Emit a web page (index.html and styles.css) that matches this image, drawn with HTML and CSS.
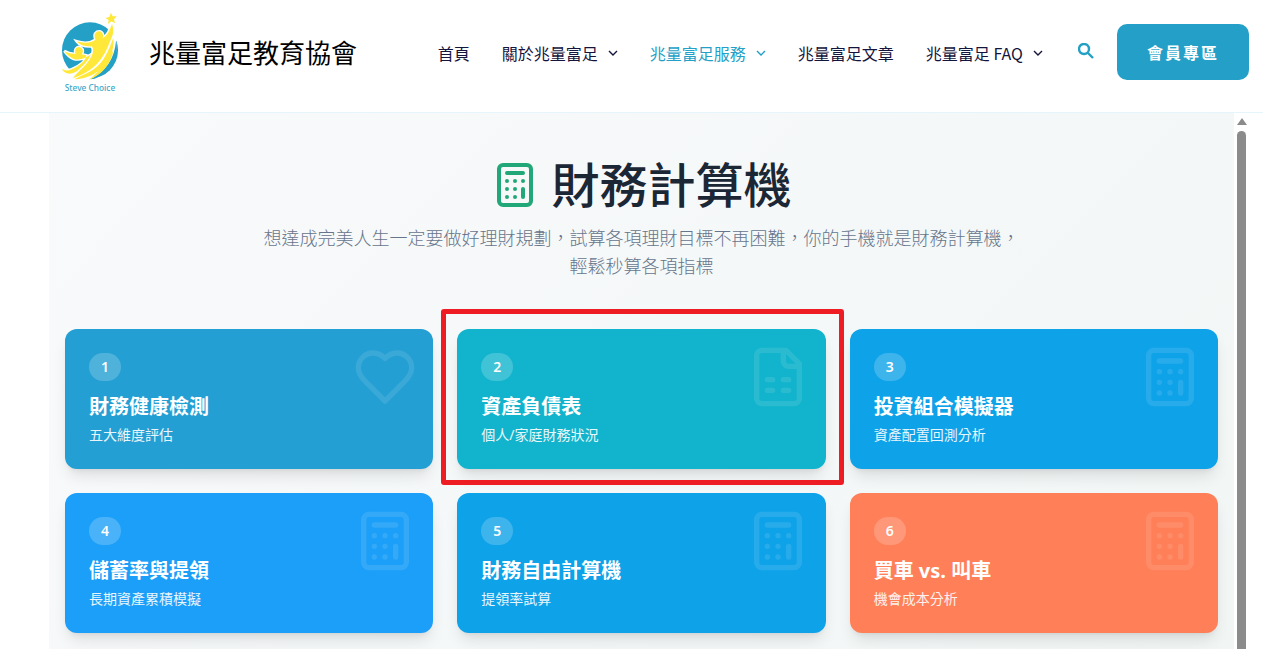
FILE: index.html
```html
<!DOCTYPE html>
<html lang="zh-Hant">
<head>
<meta charset="utf-8">
<meta name="viewport" content="width=device-width, initial-scale=1">
<title>財務計算機 - 兆量富足教育協會</title>
<link rel="stylesheet" href="styles.css">
</head>
<body>
<svg class="sprite" aria-hidden="true">
  <symbol id="calculator" viewBox="0 0 24 24">
    <rect x="4" y="2" width="16" height="20" rx="2"/>
    <path d="M8 6h8M16 14v4M16 10h.01M12 10h.01M8 10h.01M12 14h.01M8 14h.01M12 18h.01M8 18h.01"/>
  </symbol>
  <symbol id="heart" viewBox="0 0 24 24">
    <path d="M19 14c1.49-1.46 3-3.21 3-5.5A5.5 5.5 0 0 0 16.5 3c-1.76 0-3 .5-4.5 2-1.5-1.5-2.74-2-4.5-2A5.5 5.5 0 0 0 2 8.5c0 2.3 1.5 4.05 3 5.5l7 7Z"/>
  </symbol>
  <symbol id="sheet" viewBox="0 0 24 24">
    <path d="M15 2H6a2 2 0 0 0-2 2v16a2 2 0 0 0 2 2h12a2 2 0 0 0 2-2V7Z"/>
    <path d="M14 2v4a2 2 0 0 0 2 2h4M8 13h2M14 13h2M8 17h2M14 17h2"/>
  </symbol>
  <symbol id="chevron" viewBox="0 0 10 10">
    <path d="M1 3l4 4 4-4"/>
  </symbol>
</svg>

<header class="site-header">
  <a class="brand" href="#">
    <svg class="brand-logo" viewBox="-18 9 240 288" role="img" aria-label="Steve Choice">
      <circle cx="105" cy="136" r="84" fill="#24a0c6"/>
      <path d="M158 48L194 62L196 100L183 108C192 146 172 196 110 224L50 228L40 204L110 190L160 120Z" fill="#fff"/>
      <path d="M183 108C192 144 181 198 119 221L106 223C152 199 179 160 183 108Z" fill="#24a0c6"/>
      <g fill="#ffe83a" stroke="#fff" stroke-width="8" paint-order="stroke">
        <path d="M28 138C37 143 50 148 62 146C56 132 68 122 78 128C86 134 84 143 80 148L94 151C93 167 73 183 50 193C37 199 26 197 20 190C26 205 40 209 54 204C86 193 109 173 118 142C92 160 75 167 56 162C45 157 36 150 28 138Z"/>
        <path d="M171 56C163 82 153 93 144 99C147 82 136 76 126 80C116 86 118 98 122 104C108 114 88 116 65 109C74 121 92 125 111 124C119 139 111 158 92 179C79 193 61 207 54 220C81 212 113 193 133 169C154 143 162 115 172 93C176 80 175 68 171 56Z"/>
      </g>
      <g fill="#ffe83a">
        <path d="M168 23l5 11 12 0-8 9 3 12-11-6-10 8 2-12-10-6 12-3z"/>
        <path d="M175 98C179 138 163 171 133 196C109 216 78 223 58 223C87 208 111 200 130 181C152 158 163 131 175 98Z"/>
        <path d="M175 136C169 176 142 209 101 225C130 203 152 175 175 136Z"/>
      </g>
      <text x="105" y="258" text-anchor="middle" class="logo-caption">Steve Choice</text>
    </svg>
    <span class="brand-name">兆量富足教育協會</span>
  </a>
  <nav class="main-nav" aria-label="主選單">
    <a class="nav-link" href="#">首頁</a>
    <a class="nav-link" href="#">關於兆量富足<svg class="chevron"><use href="#chevron"/></svg></a>
    <a class="nav-link active" href="#">兆量富足服務<svg class="chevron"><use href="#chevron"/></svg></a>
    <a class="nav-link" href="#">兆量富足文章</a>
    <a class="nav-link" href="#">兆量富足 FAQ<svg class="chevron"><use href="#chevron"/></svg></a>
    <button class="search" type="button" aria-label="搜尋">
      <svg viewBox="0 0 16 16"><circle cx="6" cy="6" r="5"/><path d="M10 10l5 5"/></svg>
    </button>
  </nav>
  <a class="member" href="#">會員專區</a>
</header>

<main class="frame">
  <div class="panel">
    <div class="intro">
      <h1 class="title"><svg class="title-icon"><use href="#calculator"/></svg>財務計算機</h1>
      <p class="lead">想達成完美人生一定要做好理財規劃，試算各項理財目標不再困難，你的手機就是財務計算機，輕鬆秒算各項指標</p>
    </div>
    <div class="cards">
      <a class="card steel" href="#">
        <svg class="card-icon"><use href="#heart"/></svg>
        <span class="badge">1</span>
        <h2 class="card-title">財務健康檢測</h2>
        <p class="card-text">五大維度評估</p>
      </a>
      <a class="card teal" href="#">
        <svg class="card-icon"><use href="#sheet"/></svg>
        <span class="badge">2</span>
        <h2 class="card-title">資產負債表</h2>
        <p class="card-text">個人/家庭財務狀況</p>
        <span class="highlight"></span>
      </a>
      <a class="card sky" href="#">
        <svg class="card-icon"><use href="#calculator"/></svg>
        <span class="badge">3</span>
        <h2 class="card-title">投資組合模擬器</h2>
        <p class="card-text">資產配置回測分析</p>
      </a>
      <a class="card azure" href="#">
        <svg class="card-icon"><use href="#calculator"/></svg>
        <span class="badge">4</span>
        <h2 class="card-title">儲蓄率與提領</h2>
        <p class="card-text">長期資產累積模擬</p>
      </a>
      <a class="card sky" href="#">
        <svg class="card-icon"><use href="#calculator"/></svg>
        <span class="badge">5</span>
        <h2 class="card-title">財務自由計算機</h2>
        <p class="card-text">提領率試算</p>
      </a>
      <a class="card coral" href="#">
        <svg class="card-icon"><use href="#calculator"/></svg>
        <span class="badge">6</span>
        <h2 class="card-title">買車 vs. 叫車</h2>
        <p class="card-text">機會成本分析</p>
      </a>
    </div>
  </div>
  <div class="scrollbar" aria-hidden="true">
    <span class="scroll-up"></span>
    <span class="scroll-thumb"></span>
  </div>
</main>
</body>
</html>
```
FILE: styles.css
```css
* {
  box-sizing: border-box;
}

body {
  margin: 0;
  min-height: 100vh;
  display: flex;
  flex-direction: column;
  background: #fff;
  font-family: "Noto Sans", "Noto Sans CJK TC", sans-serif;
  font-size: 16px;
}

a {
  color: inherit;
  text-decoration: none;
}

.sprite {
  display: none;
}

.site-header {
  display: flex;
  align-items: center;
  padding: 8px 14px 8px 49px;
  border-bottom: 1px solid #e6f4fb;
  font-family: "Noto Sans CJK TC", sans-serif;
}

.brand {
  display: flex;
  align-items: center;
  gap: 20px;
  margin-right: auto;
  color: #000;
}

.brand-logo {
  width: 80px;
  height: 96px;
}

.logo-caption {
  font-family: "Noto Sans", sans-serif;
  font-size: 25px;
  font-weight: 500;
  fill: #3aa9cb;
}

.brand-name {
  font-size: 26px;
  line-height: 36px;
  padding-bottom: 8px;
  white-space: nowrap;
}

.main-nav {
  display: flex;
  align-items: center;
  padding-bottom: 6px;
}

.nav-link {
  display: flex;
  align-items: center;
  padding: 0 16px;
  color: #14143c;
  line-height: 24px;
  white-space: nowrap;
}

.nav-link.active {
  color: #24a0c6;
}

.chevron {
  width: 10px;
  height: 10px;
  margin-left: 10px;
  fill: none;
  stroke: currentColor;
  stroke-width: 1.4;
}

.search {
  display: flex;
  margin: 0 23px 4px 19px;
  padding: 0;
  border: 0;
  background: none;
}

.search svg {
  width: 16px;
  height: 16px;
  fill: none;
  stroke: #24a0c6;
  stroke-width: 2.4;
}

.member {
  padding: 16px 30px;
  border-radius: 10px;
  background: #24a0c8;
  color: #fff;
  font-weight: 700;
  line-height: 24px;
  letter-spacing: 2px;
  white-space: nowrap;
  margin-bottom: 8px;
}

.frame {
  flex: 1;
  display: flex;
  padding: 0 14px 0 49px;
}

.panel {
  flex: 1;
  padding: 48px 16px 16px;
  background: linear-gradient(135deg, #f9fafb 0%, #f5f8f8 50%, #f1f6f5 100%);
}

.intro {
  display: flex;
  flex-direction: column;
  align-items: center;
  gap: 14px;
  margin-bottom: 50px;
  text-align: center;
}

.title {
  display: flex;
  align-items: center;
  gap: 12px;
  margin: 0;
  color: #1c2736;
  font-size: 48px;
  font-weight: 500;
  line-height: 48px;
}

.title-icon {
  width: 48px;
  height: 48px;
  fill: none;
  stroke: #22a878;
  stroke-width: 2;
  stroke-linecap: round;
  stroke-linejoin: round;
}

.lead {
  max-width: 768px;
  margin: 0;
  color: #66758b;
  font-family: "Noto Sans CJK TC", sans-serif;
  font-size: 18px;
  font-weight: 300;
  line-height: 28px;
}

.cards {
  display: grid;
  grid-template-columns: repeat(3, 1fr);
  gap: 24px;
}

.card {
  position: relative;
  padding: 24px;
  border-radius: 12px;
  color: #fff;
  box-shadow: 0 10px 15px -3px rgba(0, 0, 0, 0.1), 0 4px 6px -4px rgba(0, 0, 0, 0.1);
}

.steel { background: #249fd3; }
.teal { background: #11b4cc; }
.sky { background: #0ea2e9; }
.azure { background: #1c9ff8; }
.coral { background: #ff7f58; }

.card-icon {
  position: absolute;
  top: 16px;
  right: 16px;
  width: 64px;
  height: 64px;
  opacity: 0.1;
  fill: none;
  stroke: #fff;
  stroke-width: 2;
  stroke-linecap: round;
  stroke-linejoin: round;
}

.badge {
  display: block;
  width: 32px;
  margin-bottom: 12px;
  border-radius: 14px;
  background: rgba(255, 255, 255, 0.2);
  font-size: 14px;
  font-weight: 600;
  line-height: 28px;
  text-align: center;
}

.card-title {
  margin: 0 0 4px;
  font-size: 20px;
  font-weight: 700;
  line-height: 28px;
}

.card-text {
  margin: 0;
  font-size: 14px;
  font-weight: 400;
  line-height: 20px;
  opacity: 0.9;
}

.highlight {
  position: absolute;
  inset: -20px -18px -16px -16px;
  border: 5px solid #ee1c23;
  border-radius: 3px;
}

.scrollbar {
  display: flex;
  flex-direction: column;
  align-items: center;
  gap: 6px;
  width: 15px;
  padding-top: 5px;
}

.scroll-up {
  border: 5px solid transparent;
  border-top: 0;
  border-bottom: 7px solid #8b8b8b;
}

.scroll-thumb {
  flex: 1;
  width: 9px;
  border-radius: 5px 5px 0 0;
  background: #8b8b8b;
}
```
